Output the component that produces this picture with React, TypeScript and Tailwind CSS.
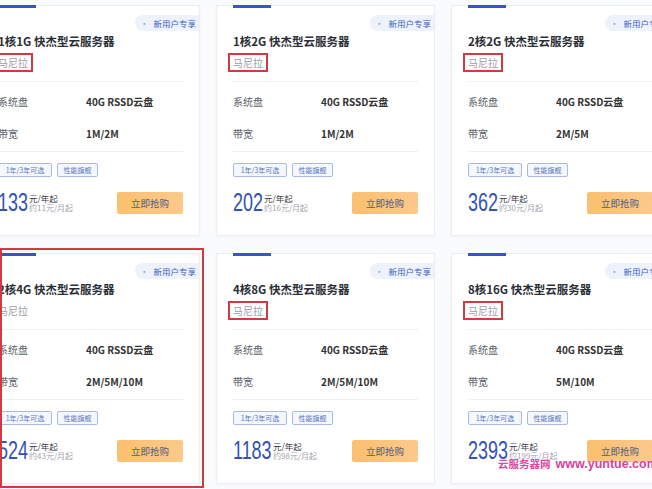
const cards = [
  { title: '1核1G 快杰型云服务器', bw: '1M/2M', price: '133', month: '约11元/月起', numW: 'w-[30px]', mark: true },
  { title: '1核2G 快杰型云服务器', bw: '1M/2M', price: '202', month: '约16元/月起', numW: 'w-[30px]', mark: true },
  { title: '2核2G 快杰型云服务器', bw: '2M/5M', price: '362', month: '约30元/月起', numW: 'w-[30px]', mark: true },
  { title: '2核4G 快杰型云服务器', bw: '2M/5M/10M', price: '524', month: '约43元/月起', numW: 'w-[30px]', mark: false },
  { title: '4核8G 快杰型云服务器', bw: '2M/5M/10M', price: '1183', month: '约98元/月起', numW: 'w-[39px]', mark: true },
  { title: '8核16G 快杰型云服务器', bw: '5M/10M', price: '2393', month: '约199元/月起', numW: 'w-[40px]', mark: true },
]

function Card({ c }: { c: (typeof cards)[number] }) {
  return (
    <div className="h-[231px] bg-white border border-[#eceef3] shadow-[0_1px_3px_rgba(30,40,80,0.04)] flex flex-col">
      {/* top accent */}
      <div className="ml-4 h-[3px] w-[38px] bg-[#3556c4] -mt-px" />

      <div className="flex justify-end mt-[7px]">
        <div className="h-[16px] pl-[5px] pr-[3px] flex items-center gap-[5px] rounded-l-full bg-[#eef3fb] text-[8.5px] text-[#3b5fc9] leading-none">
          <span className="text-[#8aa0d8]">·</span>
          <span>新用户专享</span>
        </div>
      </div>

      <div className="px-4 flex flex-col">
        <div className="mt-[2px] h-[16px] leading-[16px] text-[11.5px] font-bold text-[#2b2f36] whitespace-nowrap">
          {c.title}
        </div>

        <div className="mt-[4px] flex">
          <span
            className={
              c.mark
                ? '-ml-[5px] h-[19px] px-[3px] border-2 border-[#d23a3f] text-[10px] leading-[15px] text-[#9a9da4]'
                : '-ml-[5px] h-[19px] px-[3px] border-2 border-transparent text-[10px] leading-[15px] text-[#9a9da4]'
            }
          >
            马尼拉
          </span>
        </div>

        <div className="mt-[9px] h-px bg-[#eef0f4]" />

        <div className="mt-[12px] h-[14px] flex items-center text-[10px]">
          <span className="w-[88px] text-[#60646c]">系统盘</span>
          <span className="font-bold text-[#333]">40G RSSD云盘</span>
        </div>
        <div className="mt-[18px] h-[14px] flex items-center text-[10px]">
          <span className="w-[88px] text-[#60646c]">带宽</span>
          <span className="font-bold text-[#333]">{c.bw}</span>
        </div>

        <div className="mt-[11px] h-px bg-[#eef0f4]" />

        <div className="mt-[11px] flex gap-[5px]">
          <span className="w-[54px] h-[14px] flex items-center justify-center border border-[#a9bade] bg-[#f4f7fd] rounded-[2px] text-[7px] text-[#5b77bd]">
            1年/3年可选
          </span>
          <span className="w-[41px] h-[14px] flex items-center justify-center border border-[#a9bade] bg-[#f4f7fd] rounded-[2px] text-[7px] text-[#5b77bd]">
            性能旗舰
          </span>
        </div>

        <div className="mt-[15px] h-[22px] flex items-start">
          <span className={c.numW + ' inline-block h-[19px] overflow-visible'}>
            <span className="inline-block origin-left scale-x-[0.69] font-['Liberation_Sans',sans-serif] text-[26px] leading-[19px] text-[#3352b5]">
              {c.price}
            </span>
          </span>
          <div className="ml-[1px] mt-[1px] flex flex-col">
            <span className="h-[10px] leading-[10px] text-[8.5px] text-[#3a3d44]">元/年起</span>
            <span className="h-[10px] leading-[10px] text-[8px] text-[#a2a5ad]">{c.month}</span>
          </div>
          <button className="ml-auto w-[66px] h-[22px] rounded-[2px] bg-gradient-to-r from-[#fbc06f] to-[#fcc98a] text-[9.5px] text-[#4d5a86]">
            立即抢购
          </button>
        </div>
      </div>
    </div>
  )
}

export default function App() {
  return (
    <div className="relative w-[652px] h-[489px] overflow-hidden bg-[#fafbfc] font-['Noto_Sans_CJK_SC','Noto_Sans',sans-serif]">
      <div className="-ml-[19px] pt-[5px] grid grid-cols-[219px_219px_219px] gap-x-[16px] gap-y-[17px]">
        {cards.map((c, i) => (
          <Card key={i} c={c} />
        ))}
      </div>

      {/* red highlight around the 2核4G card */}
      <div className="absolute left-0 top-[248px] w-[204px] h-[240px] border-2 border-[#d23a3f] pointer-events-none" />

      {/* watermark */}
      <div className="absolute left-[498px] top-[458px] flex items-center gap-[5px] whitespace-nowrap pointer-events-none">
        <span className="text-[10.5px] font-bold text-[#e0479f] leading-none [text-shadow:0_0_2px_#fff]">云服务器网</span>
        <span className="text-[12.5px] font-bold text-[#d8439c] leading-none font-['Liberation_Sans',sans-serif] [text-shadow:0_0_2px_#fff]">
          www.yuntue.com
        </span>
      </div>
    </div>
  )
}
